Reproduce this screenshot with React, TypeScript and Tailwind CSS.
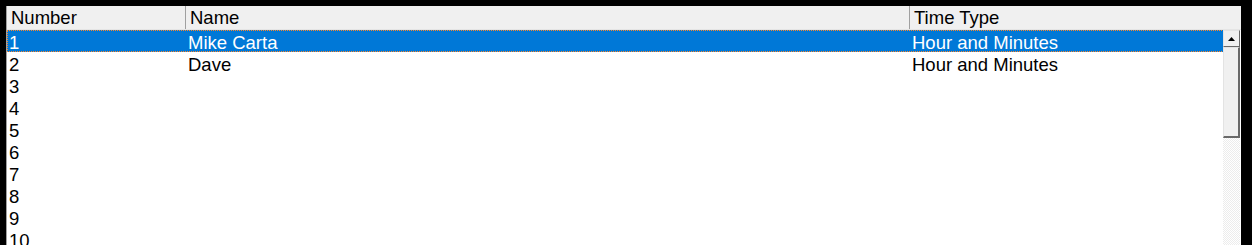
import React from "react";

const rows: [string, string, string][] = [
  ["1", "Mike Carta", "Hour and Minutes"],
  ["2", "Dave", "Hour and Minutes"],
  ["3", "", ""],
  ["4", "", ""],
  ["5", "", ""],
  ["6", "", ""],
  ["7", "", ""],
  ["8", "", ""],
  ["9", "", ""],
  ["10", "", ""],
  ["11", "", ""],
];

export default function App() {
  return (
    <div
      className="w-[1252px] h-[245px] bg-black overflow-hidden pl-[6px] pt-[6px] pr-[11px]"
      style={{ fontFamily: '"Liberation Sans", Arial, sans-serif' }}
    >
      <div className="flex flex-col h-[300px] bg-white border-l border-[#a0a0a0]">
        {/* Header */}
        <div className="flex h-[24px] bg-[#f0f0f0] border-b border-[#e5e5e5] text-[18.5px] leading-[22px] text-black">
          <div className="w-[179px] pl-[4px] pt-[1px] border-r border-[#a0a0a0] shrink-0">Number</div>
          <div className="w-[724px] pl-[4px] pt-[1px] border-r border-[#a0a0a0] shrink-0">Name</div>
          <div className="flex-1 pl-[4px] pt-[1px]">Time Type</div>
        </div>
        {/* Body */}
        <div className="flex flex-1">
          <div className="flex-1 flex flex-col text-[18.5px] leading-[22px]">
            {rows.map(([n, name, type], i) => (
              <div
                key={n}
                className={
                  i === 0
                    ? "flex h-[22px] bg-[#0078d7] text-white border border-dotted border-[#ff8728] -mr-[1px]"
                    : "flex h-[22px] text-black border border-transparent"
                }
              >
                <div className="w-[178px] pl-[1px] pt-[1px] shrink-0">{n}</div>
                <div className="w-[724px] pl-[2px] pt-[1px] shrink-0">{name}</div>
                <div className="flex-1 pl-[2px] pt-[1px]">{type}</div>
              </div>
            ))}
          </div>
          <div className="w-[18px] flex flex-col pr-[1px]">
            <div className="h-[17px] w-[17px] bg-[#f0f0f0] border-t border-l border-[#e3e3e3] border-r border-b border-r-[#696969] border-b-[#696969] flex items-center justify-center">
              <svg width="7" height="4" viewBox="0 0 7 4">
                <polygon points="3.5,0 7,4 0,4" fill="#000" />
              </svg>
            </div>
            <div className="h-[91px] w-[17px] bg-[#f0f0f0] border-t border-l border-[#e3e3e3] border-r-2 border-b-2 border-r-[#696969] border-b-[#696969]" />
            <div className="flex-1 w-[17px] bg-[repeating-conic-gradient(#ececec_0_25%,#ffffff_0_50%)] bg-[length:2px_2px]" />
          </div>
        </div>
      </div>
    </div>
  );
}
